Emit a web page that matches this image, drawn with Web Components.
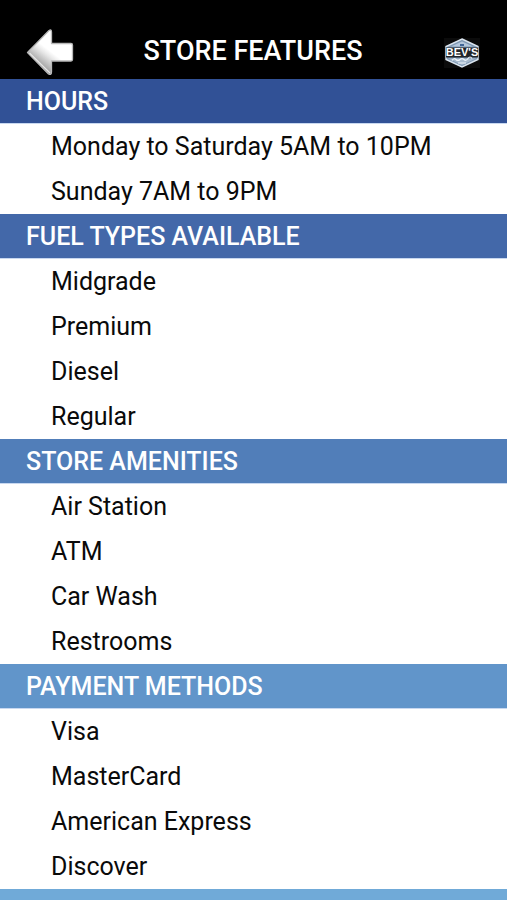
<!DOCTYPE html>
<html lang="en">
<head>
<meta charset="utf-8">
<meta name="viewport" content="width=device-width, initial-scale=1">
<title>Store Features</title>
<style>
  body { margin: 0; background: #fff; font-family: Roboto, "Liberation Sans", sans-serif; font-size: 25px; line-height: 45px; }
</style>
</head>
<body>
<store-page></store-page>

<template id="back-button">
  <style>
    :host { display: block; }
    button { display: block; margin: 0; padding: 0; border: 0; background: none; cursor: pointer; }
    svg { display: block; }
  </style>
  <button type="button" aria-label="Back">
    <svg width="48" height="48" viewBox="0 0 48 48" aria-hidden="true">
      <defs>
        <linearGradient id="shine" x1="0.6" y1="0.4" x2="0.25" y2="0.85">
          <stop offset="0.2" stop-color="#ffffff"/>
          <stop offset="0.4" stop-color="#e8e8e8"/>
          <stop offset="1" stop-color="#909090"/>
        </linearGradient>
      </defs>
      <path d="M1.5 24.5 23 2.5Q25.500 1 25.500 4V15.500H45Q46.500 15.500 46.500 17V31.500Q46.500 33 45 33H25.500V44Q25.500 47.500 22.500 46Z" fill="url(#shine)" stroke="#b9b9b9" stroke-width="1.300" stroke-linejoin="round"/>
      <path d="M3.500 25 24 45" fill="none" stroke="#e6e6e6" stroke-width="1.200"/>
    </svg>
  </button>
</template>

<template id="brand-logo">
  <style>
    :host { display: block; }
    svg { display: block; }
    text { font-family: "Liberation Sans", sans-serif; font-weight: 700; font-size: 11px; fill: #fff; }
  </style>
  <svg width="36" height="30" viewBox="0 0 36 30" role="img" aria-label="Bev's">
    <rect width="36" height="30" fill="#0b0b0b"/>
    <path d="M18 1 34 8.500V21.500L18 29 2 21.500V8.500Z" fill="#7f98b3" stroke="#dbe5ef" stroke-width="1.400"/>
    <path d="M18 3.500 29 8.500H7Z" fill="#b4c7dc"/>
    <path d="M16 6h4v2h-4z" fill="#3f6496"/>
    <path d="M2 9.500H34V19.500H2Z" fill="#20242a"/>
    <path d="M4 20.500H32L18 27Z" fill="#a9bccf"/>
    <path d="M8 22.500q2-3 4-1t4 0 4 0 4-1 4 0M14 25h8" fill="none" stroke="#eef4fb" stroke-width="1.200"/>
    <text x="18" y="18" text-anchor="middle">BEV'S</text>
  </svg>
</template>

<template id="app-bar">
  <style>
    :host { display: grid; grid-template-columns: 1fr auto 1fr; align-items: center; box-sizing: border-box; padding: 25px 27px 3px 26px; background: #000; color: #fff; }
    h1 { margin: 0; font-size: 27px; font-weight: 500; line-height: 48px; text-align: center; }
    back-button { padding-top: 3px; }
    brand-logo { justify-self: end; padding-top: 5px; }
  </style>
  <back-button></back-button>
  <h1><slot></slot></h1>
  <brand-logo></brand-logo>
</template>

<template id="feature-section">
  <style>
    :host { display: block; }
    h2 { margin: 0; border-bottom: 1px solid #c8d8f0; background: var(--bar); color: #fff; padding: 2px 26px 0; font-size: 25px; font-weight: 500; line-height: 42px; }
    ul { margin: 0; padding: 0; list-style: none; }
  </style>
  <h2><slot name="heading"></slot></h2>
  <ul role="list"><slot></slot></ul>
</template>

<template id="feature-item">
  <style>
    :host { display: block; padding: 0 51px; color: #0a0a0a; }
  </style>
  <slot></slot>
</template>

<template id="store-page">
  <style>
    :host { display: flex; flex-direction: column; min-height: 100vh; }
    app-bar { min-height: 79px; }
    .next { flex: 1; min-height: 11px; background: #70aad8; }
  </style>
  <app-bar>STORE FEATURES</app-bar>
  <main>
    <feature-section style="--bar:#315196">
      <span slot="heading">HOURS</span>
      <feature-item>Monday to Saturday 5AM to 10PM</feature-item>
      <feature-item>Sunday 7AM to 9PM</feature-item>
    </feature-section>
    <feature-section style="--bar:#4368a9">
      <span slot="heading">FUEL TYPES AVAILABLE</span>
      <feature-item>Midgrade</feature-item>
      <feature-item>Premium</feature-item>
      <feature-item>Diesel</feature-item>
      <feature-item>Regular</feature-item>
    </feature-section>
    <feature-section style="--bar:#517eb9">
      <span slot="heading">STORE AMENITIES</span>
      <feature-item>Air Station</feature-item>
      <feature-item>ATM</feature-item>
      <feature-item>Car Wash</feature-item>
      <feature-item>Restrooms</feature-item>
    </feature-section>
    <feature-section style="--bar:#6195ca">
      <span slot="heading">PAYMENT METHODS</span>
      <feature-item>Visa</feature-item>
      <feature-item>MasterCard</feature-item>
      <feature-item>American Express</feature-item>
      <feature-item>Discover</feature-item>
    </feature-section>
  </main>
  <div class="next"></div>
</template>

<script>
  const define = (name, setup) => customElements.define(name, class extends HTMLElement {
    constructor() {
      super();
      this.attachShadow({ mode: "open" })
        .append(document.getElementById(name).content.cloneNode(true));
    }
    connectedCallback() { if (setup) setup(this); }
  });
  define("back-button", el => {
    el.shadowRoot.querySelector("button").onclick = () => history.back();
  });
  define("brand-logo");
  define("app-bar");
  define("feature-item", el => el.setAttribute("role", "listitem"));
  define("feature-section");
  define("store-page");
</script>
</body>
</html>
